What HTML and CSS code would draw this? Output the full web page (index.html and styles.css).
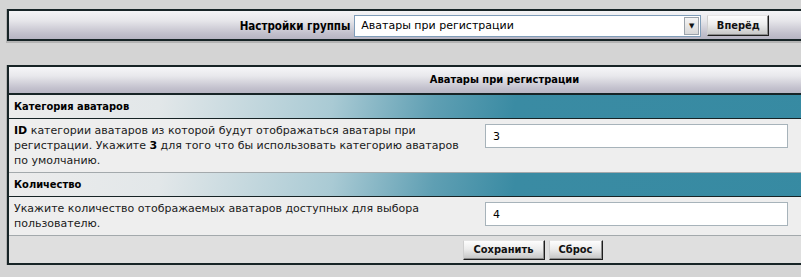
FILE: index.html
```html
<!DOCTYPE html>
<html lang="ru">
<head>
  <meta charset="UTF-8">
  <title>Настройки группы</title>
  <link rel="stylesheet" href="styles.css">
</head>
<body>
  <form class="frame group-bar">
    <label class="bold" for="group">Настройки группы</label>
    <div class="select-wrap">
      <select id="group">
        <option>Аватары при регистрации</option>
      </select>
      <span class="select-arrow">&#9660;</span>
    </div>
    <button type="button" class="btn">Вперёд</button>
  </form>

  <form class="frame options">
    <div class="head-row bold">Аватары при регистрации</div>

    <div class="cat-row bold">Категория аватаров</div>
    <div class="opt-row">
      <div class="opt-desc"><b>ID</b> категории аватаров из которой будут отображаться аватары при регистрации. Укажите <b>3</b> для того что бы использовать категорию аватаров по умолчанию.</div>
      <div class="opt-field"><input type="text" value="3"></div>
    </div>

    <div class="cat-row bold">Количество</div>
    <div class="opt-row">
      <div class="opt-desc">Укажите количество отображаемых аватаров доступных для выбора пользователю.</div>
      <div class="opt-field"><input type="text" value="4"></div>
    </div>

    <div class="foot-row">
      <button type="submit" class="btn btn-save">Сохранить</button>
      <button type="reset" class="btn btn-reset">Сброс</button>
    </div>
  </form>
</body>
</html>
```

FILE: styles.css
```css
body {
  margin: 0;
  padding: 9px 0 0 7px;
  width: 1100px;
  background-color: #d4d4d4;
  font-family: "DejaVu Sans", Verdana, sans-serif;
  font-size: 11px;
  color: #000;
  overflow: hidden;
}

.bold,
.btn {
  font-family: "DejaVu Sans Condensed", "DejaVu Sans", Tahoma, sans-serif;
  font-stretch: condensed;
  font-weight: bold;
  font-size: 11px;
}

.frame {
  box-sizing: border-box;
  width: 995px;
  margin: 0;
  border: 2px solid #172426;
  box-shadow: 0 1px 0 1px #b3b3b3;
}

/* top bar */
.group-bar {
  height: 32px;
  display: flex;
  justify-content: center;
  align-items: center;
  gap: 4px;
  padding-top: 1px;
  background: linear-gradient(to bottom, #f4f4f6 0%, #e6e6ea 35%, #c2c0cc 80%, #b6b4c2 100%);
}

.group-bar label {
  font-size: 11.5px;
}

.select-wrap {
  box-sizing: border-box;
  width: 347px;
  height: 22px;
  display: flex;
  align-items: stretch;
  border: 1px solid #7f9db9;
  background-color: #fff;
}

.select-wrap select {
  flex: 1;
  appearance: none;
  -webkit-appearance: none;
  border: none;
  outline: none;
  background: transparent;
  padding: 0 0 0 6px;
  font-family: "DejaVu Sans", Verdana, sans-serif;
  font-size: 11px;
  color: #000;
}

.select-arrow {
  box-sizing: border-box;
  width: 15px;
  margin: 1px;
  display: flex;
  align-items: center;
  justify-content: center;
  border: 1px solid #9aa2aa;
  background: linear-gradient(to bottom, #f4f4f4, #d8d8d8);
  font-size: 7px;
  color: #111;
}

.btn {
  box-sizing: border-box;
  height: 21px;
  padding: 0;
  text-align: center;
  border: 1px solid;
  border-color: #e4e4e4 #1e1e1e #1e1e1e #cfcfcf;
  box-shadow: inset -1px -1px 0 #8c8c8c;
  background: linear-gradient(to bottom, #fdfdfd 0%, #ececec 45%, #c4c4c4 100%);
  color: #111;
  cursor: pointer;
}

.group-bar .btn {
  width: 62px;
  margin-left: 2px;
}

/* options table */
.options {
  margin-top: 24px;
  background-color: #eeeeee;
}

.head-row {
  height: 26px;
  line-height: 26px;
  text-align: center;
  border-bottom: 2px solid #172426;
  background: linear-gradient(to bottom, #f6f6f8 0%, #e8e8ec 35%, #c4c2ce 80%, #b8b6c4 100%);
}

.cat-row {
  height: 23px;
  line-height: 23px;
  padding-left: 5px;
  border-bottom: 1px solid #172426;
  background: linear-gradient(100deg, #ececec 0px, #e2e7e9 150px, #a9cad4 320px, #5f9fb3 420px, #3a8ba3 500px, #358aa2 100%);
}

.opt-row {
  display: grid;
  grid-template-columns: 470px 1fr;
  border-bottom: 1px solid #a3a9ac;
  background-color: #eeeeee;
}

.opt-desc {
  padding: 4px 12px 4px 5px;
  line-height: 15px;
  color: #1a1a1a;
}

.opt-desc b {
  font-family: "DejaVu Sans", Verdana, sans-serif;
  color: #000;
}

.opt-field {
  padding: 5px 0 0 6px;
}

.opt-field input {
  box-sizing: border-box;
  width: 303px;
  height: 24px;
  padding: 0 7px;
  border: 1px solid #a7b3ba;
  background-color: #fff;
  font-family: "DejaVu Sans", Verdana, sans-serif;
  font-size: 11px;
  color: #000;
}

.foot-row {
  height: 27px;
  display: flex;
  justify-content: center;
  align-items: center;
  gap: 4px;
  padding-left: 56px;
  background-color: #dfdfdf;
}

.foot-row .btn {
  height: 20px;
}

.btn-save {
  width: 82px;
}

.btn-reset {
  width: 54px;
}
```
